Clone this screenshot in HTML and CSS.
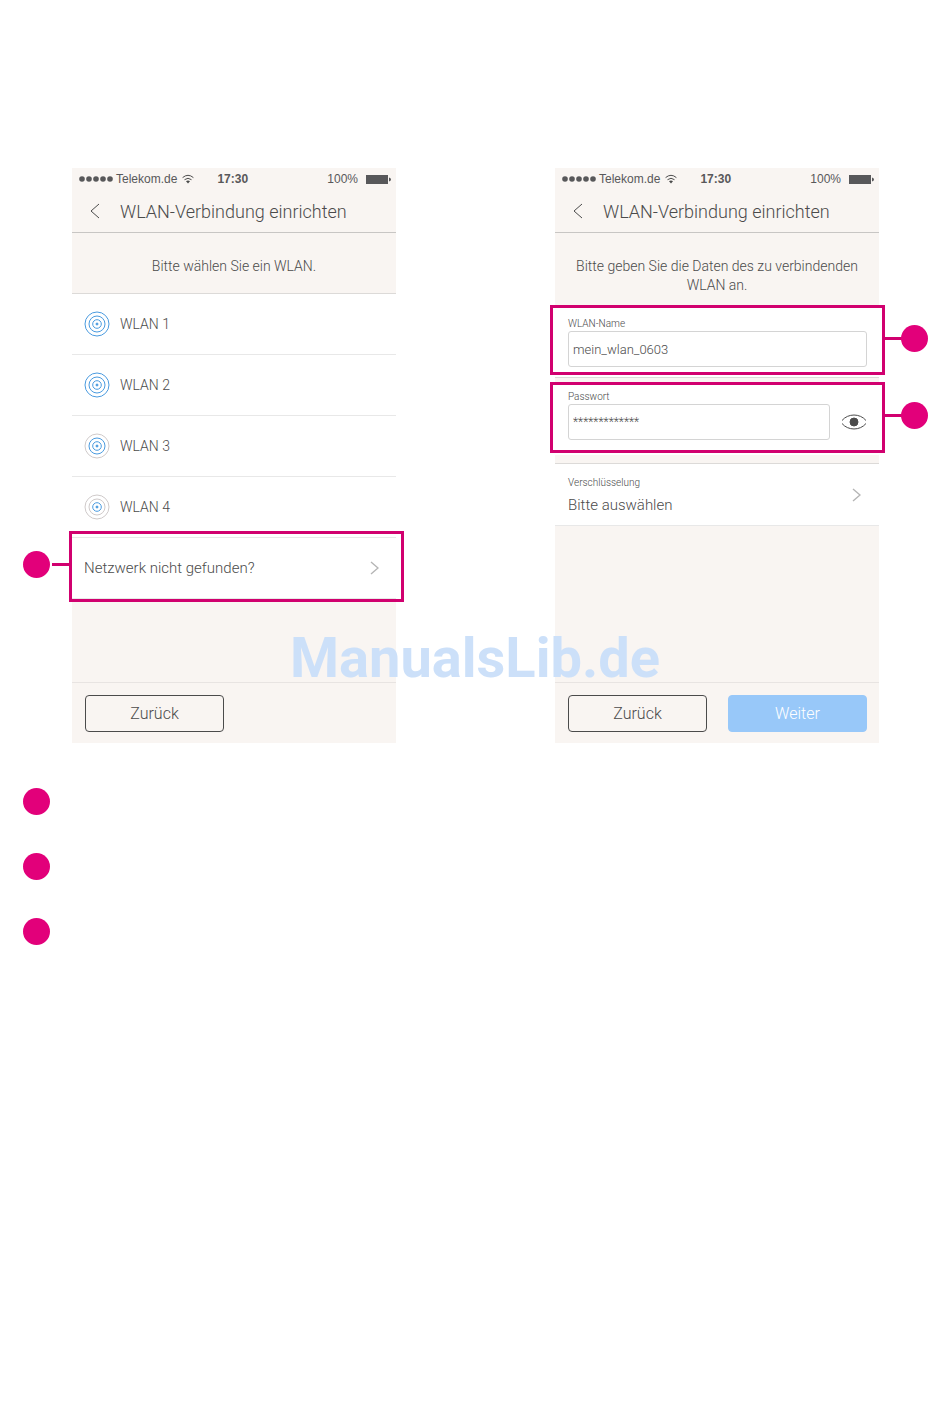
FILE: index.html
```html
<!DOCTYPE html>
<html lang="de">
<head>
  <meta charset="UTF-8">
  <meta name="viewport" content="width=device-width, initial-scale=1.0">
  <title>WLAN-Verbindung einrichten</title>
  <link rel="stylesheet" href="styles.css">
</head>
<body>
  <main class="page">
    <div class="phones">
      <section class="phone">
        <div class="status">
          <svg class="dots" width="34" height="6" viewBox="0 0 34 6"><circle cx="3" cy="3" r="2.8"/><circle cx="10" cy="3" r="2.8"/><circle cx="17" cy="3" r="2.8"/><circle cx="24" cy="3" r="2.8"/><circle cx="31" cy="3" r="2.8"/></svg>
          <span class="carrier">Telekom.de</span>
          <svg class="wifi" width="12" height="10" viewBox="0 0 12 10"><path d="M.6 3.6Q6-1 11.4 3.6M2.5 5.7Q6 2.8 9.5 5.7"/><path class="solid" d="M4 7.2Q6 5.8 8 7.2L6 9.4Z"/></svg>
          <span class="time">17:30</span>
          <span class="percent">100%</span>
          <svg class="battery" width="25" height="9" viewBox="0 0 25 9"><rect width="22" height="9"/><path d="M23 2.500Q25 3 25 4.500T23 6.500Z"/></svg>
        </div>
        <header class="titlebar">
          <button class="back" aria-label="Zurück"><svg width="10" height="16" viewBox="0 0 10 16"><path d="M9 1 1 8l8 7"/></svg></button>
          <h1>WLAN-Verbindung einrichten</h1>
        </header>
        <p class="intro">Bitte wählen Sie ein WLAN.</p>
        <nav class="list">
          <a class="row" href="#"><svg class="signal s4" width="26" height="26" viewBox="0 0 26 26"><circle cx="13" cy="13" r="12"/><circle cx="13" cy="13" r="8"/><circle cx="13" cy="13" r="4.300"/><circle class="core" cx="13" cy="13" r="1"/></svg>WLAN 1</a>
          <a class="row" href="#"><svg class="signal s4" width="26" height="26" viewBox="0 0 26 26"><circle cx="13" cy="13" r="12"/><circle cx="13" cy="13" r="8"/><circle cx="13" cy="13" r="4.300"/><circle class="core" cx="13" cy="13" r="1"/></svg>WLAN 2</a>
          <a class="row" href="#"><svg class="signal s3" width="26" height="26" viewBox="0 0 26 26"><circle cx="13" cy="13" r="12"/><circle cx="13" cy="13" r="8"/><circle cx="13" cy="13" r="4.300"/><circle class="core" cx="13" cy="13" r="1"/></svg>WLAN 3</a>
          <a class="row" href="#"><svg class="signal s2" width="26" height="26" viewBox="0 0 26 26"><circle cx="13" cy="13" r="12"/><circle cx="13" cy="13" r="8"/><circle cx="13" cy="13" r="4.300"/><circle class="core" cx="13" cy="13" r="1"/></svg>WLAN 4</a>
          <a class="row marked" href="#">Netzwerk nicht gefunden?
            <svg class="chevron" width="9" height="14" viewBox="0 0 9 14"><path d="M1 1l7 6-7 6"/></svg>
            <span class="callout left"></span>
          </a>
        </nav>
        <footer class="actions">
          <button class="btn">Zurück</button>
        </footer>
      </section>

      <section class="phone">
        <div class="status">
          <svg class="dots" width="34" height="6" viewBox="0 0 34 6"><circle cx="3" cy="3" r="2.8"/><circle cx="10" cy="3" r="2.8"/><circle cx="17" cy="3" r="2.8"/><circle cx="24" cy="3" r="2.8"/><circle cx="31" cy="3" r="2.8"/></svg>
          <span class="carrier">Telekom.de</span>
          <svg class="wifi" width="12" height="10" viewBox="0 0 12 10"><path d="M.6 3.6Q6-1 11.4 3.6M2.5 5.7Q6 2.8 9.5 5.7"/><path class="solid" d="M4 7.2Q6 5.8 8 7.2L6 9.4Z"/></svg>
          <span class="time">17:30</span>
          <span class="percent">100%</span>
          <svg class="battery" width="25" height="9" viewBox="0 0 25 9"><rect width="22" height="9"/><path d="M23 2.500Q25 3 25 4.500T23 6.500Z"/></svg>
        </div>
        <header class="titlebar">
          <button class="back" aria-label="Zurück"><svg width="10" height="16" viewBox="0 0 10 16"><path d="M9 1 1 8l8 7"/></svg></button>
          <h1>WLAN-Verbindung einrichten</h1>
        </header>
        <p class="intro long">Bitte geben Sie die Daten des zu verbindenden WLAN an.</p>
        <form class="form">
          <div class="field marked">
            <label for="ssid">WLAN-Name</label>
            <input id="ssid" type="text" value="mein_wlan_0603">
            <span class="callout right"></span>
          </div>
          <div class="field marked">
            <label for="pass">Passwort</label>
            <div class="password">
              <input id="pass" type="text" value="*************">
              <button class="eye" type="button" aria-label="Passwort anzeigen"><svg width="26" height="16" viewBox="0 0 26 16"><path d="M1 6.500C7-.8 19-.8 25 6.500M1 9.500C7 16.800 19 16.800 25 9.500"/><circle cx="13" cy="8" r="4"/></svg></button>
            </div>
            <span class="callout right"></span>
          </div>
          <div class="choice">
            <label for="enc">Verschlüsselung</label>
            <select id="enc">
              <option>Bitte auswählen</option>
            </select>
            <svg class="chevron" width="9" height="14" viewBox="0 0 9 14"><path d="M1 1l7 6-7 6"/></svg>
          </div>
        </form>
        <footer class="actions">
          <button class="btn">Zurück</button>
          <button class="btn primary">Weiter</button>
        </footer>
      </section>
      <div class="watermark">ManualsLib.de</div>
    </div>

    <ul class="legend">
      <li></li>
      <li></li>
      <li></li>
    </ul>
  </main>
</body>
</html>
```
FILE: styles.css
```css
* {
  box-sizing: border-box;
}
body {
  margin: 0;
  background: #fff;
  color: #4b4b4b;
  font-family: Roboto, "Liberation Sans", sans-serif;
  font-weight: 300;
  font-size: 14px;
}
button, input, select {
  font: inherit;
  color: inherit;
}
svg {
  flex: none;
  fill: none;
  stroke: #4b4b4b;
}
.page {
  padding: 168px 23px 40px;
}
.phones {
  position: relative;
  display: flex;
  justify-content: space-between;
  gap: 40px;
  padding: 0 48px 0 49px;
}
.phone {
  display: flex;
  flex-direction: column;
  flex: 0 1 324px;
  min-height: 575px;
  background: #f9f5f2;
}

/* status bar */
.status {
  display: flex;
  align-items: center;
  height: 22px;
  padding: 0 5px 0 7px;
  color: #58585a;
  font-family: "Liberation Sans", sans-serif;
  font-weight: 400;
  font-size: 12px;
}
.dots, .battery {
  fill: #58585a;
  stroke: none;
}
.carrier {
  margin: 0 5px 0 3px;
}
.wifi .solid {
  fill: #4b4b4b;
  stroke: none;
}
.time {
  margin-left: 23px;
  font-weight: 700;
}
.percent {
  margin: 0 8px 0 auto;
}

.titlebar {
  display: flex;
  align-items: center;
  height: 43px;
  padding-left: 16px;
  border-bottom: 1px solid #c8c6c4;
}
.titlebar h1 {
  margin: 0 0 0 18px;
  font-size: 18px;
  font-weight: 300;
}
.back {
  display: flex;
  padding: 0 2px;
  border: 0;
  background: none;
}
.intro {
  margin: 0;
  padding: 24px 20px 17px;
  line-height: 19px;
  text-align: center;
}
.intro.long {
  padding-bottom: 10px;
}

/* network list */
.list {
  border-top: 1px solid #dcdad8;
}
.row {
  display: flex;
  align-items: center;
  height: 61px;
  padding: 0 17px 0 12px;
  border-bottom: 1px solid #e8e8e8;
  background: #fff;
  color: inherit;
  text-decoration: none;
}
.row.marked {
  font-size: 15px;
}
.signal {
  margin-right: 10px;
  stroke: #4a9be0;
}
.signal .core {
  fill: #4a9be0;
}
.s3 circle:nth-child(1),
.s2 circle:nth-child(1),
.s2 circle:nth-child(2) {
  stroke: #cfcaca;
}
.chevron {
  margin-left: auto;
  stroke: #b5b5b5;
  stroke-width: 1.4;
}

/* highlighted areas */
.marked {
  position: relative;
}
.callout {
  position: absolute;
  border: 3px solid #d1006f;
  pointer-events: none;
}
.callout.left {
  top: -7px;
  bottom: -4px;
  left: -3px;
  right: -8px;
}
.callout.right {
  top: 0;
  bottom: 2px;
  left: -5px;
  right: -6px;
}
.callout::before {
  content: "";
  position: absolute;
  top: 29px;
  width: 20px;
  height: 3px;
  background: #d1006f;
}
.callout::after {
  content: "";
  position: absolute;
  top: 17px;
  width: 27px;
  height: 27px;
  border-radius: 50%;
  background: #e2007a;
}
.callout.left::before {
  right: 100%;
}
.callout.left::after {
  right: calc(100% + 22px);
}
.callout.right::before {
  left: 100%;
}
.callout.right::after {
  left: calc(100% + 19px);
}

/* form */
.field {
  height: 73px;
  padding: 12px 12px 0 13px;
  border-bottom: 1px solid #dcdad8;
  background: #fff;
}
.field + .field {
  margin-top: 4px;
  padding-top: 8px;
  border-bottom: 0;
}
.field label, .choice label {
  display: block;
  font-size: 10px;
  line-height: 14px;
}
.field input {
  width: 100%;
  height: 36px;
  padding: 0 4px;
  border: 1px solid #d4d4d4;
  border-radius: 3px;
  background: #fff;
  font-size: 13px;
}
.password {
  display: flex;
  align-items: center;
  gap: 11px;
}
.password input {
  flex: 1;
  min-width: 0;
  font-size: 12px;
}
.eye {
  display: flex;
  padding: 0;
  border: 0;
  background: none;
}
.eye circle {
  fill: #4b4b4b;
}
.choice {
  display: grid;
  grid-template-columns: 1fr auto;
  align-items: center;
  margin-top: 8px;
  padding: 12px 18px 5px 13px;
  border-top: 1px solid #dcdad8;
  border-bottom: 1px solid #e8e8e8;
  background: #fff;
}
.choice select {
  grid-row: 2;
  height: 30px;
  padding: 0;
  border: 0;
  background: none;
  appearance: none;
  font-size: 15px;
}
.choice .chevron {
  grid-column: 2;
  grid-row: 1 / 3;
  margin-bottom: 6px;
}

.actions {
  display: flex;
  justify-content: space-between;
  margin-top: auto;
  padding: 12px 12px 11px 13px;
  border-top: 1px solid #e8e4e2;
}
.btn {
  width: 139px;
  height: 37px;
  border: 1px solid #4b4b4b;
  border-radius: 4px;
  background: none;
  font-size: 16px;
}
.btn.primary {
  border-color: #98c8f9;
  background: #98c8f9;
  color: #fff;
}

.watermark {
  position: absolute;
  top: 458px;
  left: 0;
  right: 0;
  color: #cce0f9;
  font-size: 56px;
  font-weight: 700;
  line-height: 64px;
  text-align: center;
  pointer-events: none;
}

.legend {
  display: grid;
  gap: 38px;
  margin: 45px 0 0;
  padding: 0;
  list-style: none;
}
.legend li {
  width: 27px;
  height: 27px;
  border-radius: 50%;
  background: #e2007a;
}
```
